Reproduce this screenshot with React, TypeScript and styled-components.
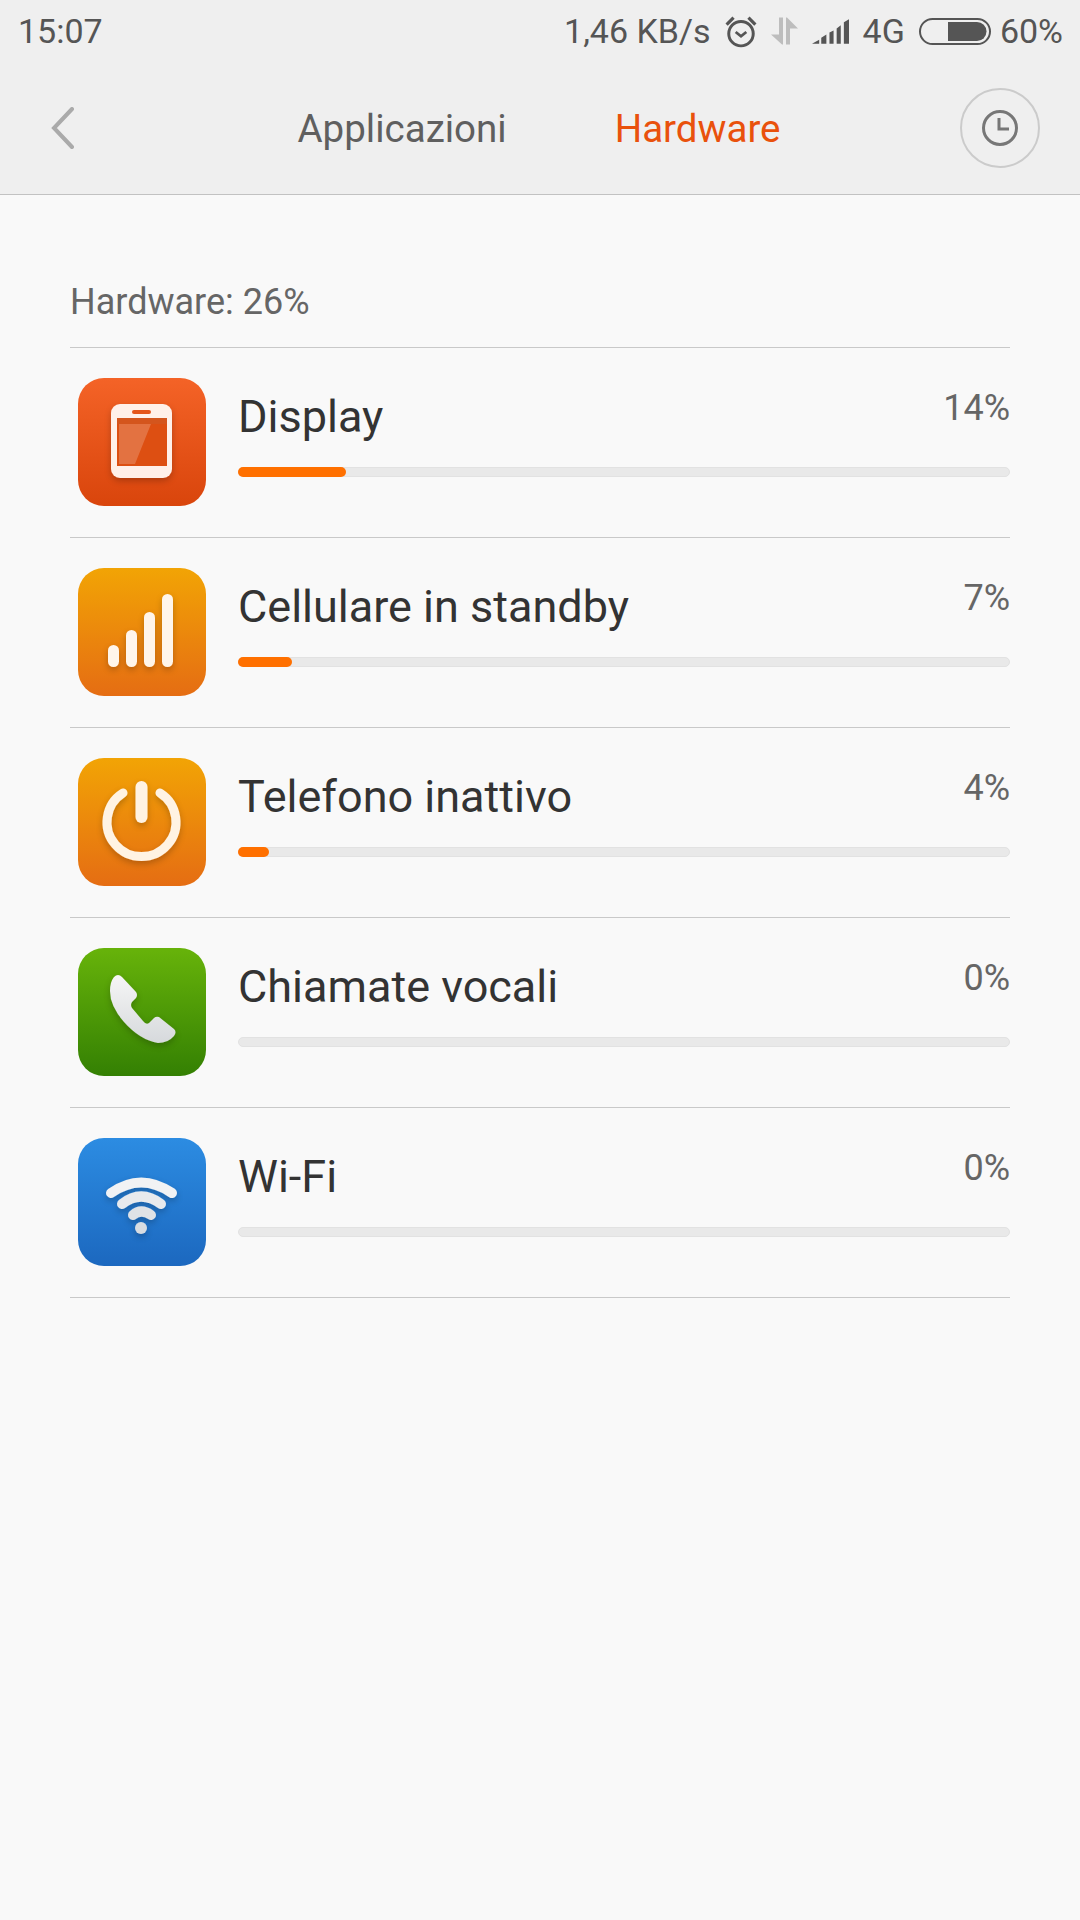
import styled, { createGlobalStyle } from "styled-components";
import type { ReactNode } from "react";

const GlobalStyle = createGlobalStyle`
    html, body {
        margin: 0;
        padding: 0;
        background: #f9f9f9;
    }
    body {
        font-family: Roboto, "Liberation Sans", sans-serif;
    }
`;

const Screen = styled.div`
    width: 1080px;
    height: 1920px;
    background: #f9f9f9;
    overflow: hidden;
`;

// Status bar + title bar
const Header = styled.header`
    height: 195px;
    box-sizing: border-box;
    background: #efefef;
    border-bottom: 1px solid #c2c2c2;
`;

const StatusBar = styled.div`
    height: 62px;
    box-sizing: border-box;
    padding: 0 17px 0 18px;
    display: flex;
    align-items: center;
    justify-content: space-between;
    color: #555;
    font-size: 34px;
`;

const StatusRight = styled.div`
    display: flex;
    align-items: center;
    gap: 14px;
`;

const BatteryValue = styled.span`
    margin-left: -5px;
`;

const TitleBar = styled.div`
    height: 132px;
    padding: 0 40px 0 50px;
    display: flex;
    align-items: center;
`;

const BackIcon = styled.svg`
    width: 26px;
    height: 42px;
    flex: none;
`;

const Tabs = styled.nav`
    flex: 1;
    display: flex;
    justify-content: center;
    gap: 108px;
    padding-left: 42px;
`;

const Tab = styled.span<{ $active?: boolean }>`
    font-size: 38.5px;
    color: ${(props) => (props.$active ? "#e9510c" : "#5f5f5f")};
`;

const HistoryButton = styled.div`
    width: 80px;
    height: 80px;
    box-sizing: border-box;
    border: 2px solid #cbcbcb;
    border-radius: 50%;
    display: flex;
    align-items: center;
    justify-content: center;
`;

// Usage list
const Content = styled.main`
    padding: 0 70px;
`;

const Summary = styled.div`
    height: 153px;
    box-sizing: border-box;
    padding-top: 86px;
    line-height: 42px;
    font-size: 36px;
    color: #666;
    border-bottom: 1px solid #c9c9c9;
`;

const Row = styled.div`
    height: 190px;
    box-sizing: border-box;
    padding: 30px 0 0 8px;
    display: flex;
    gap: 32px;
    border-bottom: 1px solid #c9c9c9;
`;

const Tile = styled.div<{ $from: string; $to: string }>`
    width: 128px;
    height: 128px;
    flex: none;
    border-radius: 26px;
    overflow: hidden;
    background: linear-gradient(${(props) => props.$from}, ${(props) => props.$to});
    svg {
        display: block;
        filter: blur(0.5px);
    }
`;

const Info = styled.div`
    flex: 1;
    min-width: 0;
`;

const InfoTop = styled.div`
    height: 89px;
    display: flex;
    justify-content: space-between;
    align-items: flex-start;
`;

const Name = styled.span`
    font-size: 45px;
    line-height: 52px;
    margin-top: 13px;
    color: #333;
`;

const Percent = styled.span`
    font-size: 36px;
    line-height: 42px;
    margin-top: 9px;
    color: #666;
`;

const Track = styled.div`
    height: 10px;
    box-sizing: border-box;
    border: 1px solid #e2e2e2;
    border-radius: 5px;
    background: #e9e9e9;
    position: relative;
`;

const Fill = styled.div<{ $value: number }>`
    position: absolute;
    left: -1px;
    top: -1px;
    bottom: -1px;
    width: ${(props) => props.$value}%;
    border-radius: 5px;
    background: #ff7000;
`;

function AlarmIcon() {
    return (
        <svg width="32" height="33" viewBox="0 0 30 31" fill="none" stroke="#555">
            <circle cx="15" cy="17.5" r="11.5" strokeWidth="2.8" />
            <path d="M10 16l5 4 5-4" strokeWidth="2.6" />
            <path d="M1.5 9L8 2.5M28.5 9L22 2.5" strokeWidth="3" />
        </svg>
    );
}

function DataIcon() {
    return (
        <svg width="27" height="28" viewBox="0 0 27 27" fill="#bdbdbd">
            <path d="M8 0h4v27h-1L0 17h8z" />
            <path d="M15 0h1l11 11h-8v16h-4z" />
        </svg>
    );
}

function SignalIcon() {
    return (
        <svg width="37" height="26" viewBox="0 0 36 25" fill="#555">
            <path d="M0 25l7-4v4z" />
            <path d="M9 19l5-3v9H9z" />
            <path d="M17 14l4-2v13h-4z" />
            <path d="M24 10l4-3v18h-4z" />
            <path d="M31 4l5-3v24h-5z" />
        </svg>
    );
}

function BatteryIcon() {
    return (
        <svg width="72" height="27" viewBox="0 0 72 27">
            <rect x="1" y="1" width="70" height="25" rx="12.5" fill="none" stroke="#555" strokeWidth="2" />
            <path d="M29 4h29a9.5 9.5 0 0 1 0 19H29z" fill="#555" />
        </svg>
    );
}

function ClockIcon() {
    return (
        <svg width="38" height="38" viewBox="0 0 38 38" fill="none" stroke="#777" strokeWidth="3">
            <circle cx="19" cy="19" r="16.5" />
            <path d="M18 9v11h10" />
        </svg>
    );
}

function IconSvg({ id, children }: { id: string; children: ReactNode }) {
    return (
        <svg width="128" height="128" viewBox="0 0 128 128">
            <defs>
                <filter id={id} x="-30%" y="-30%" width="160%" height="160%">
                    <feDropShadow dx="0" dy="3" stdDeviation="3" floodColor="#000" floodOpacity="0.22" />
                </filter>
                <linearGradient id={`${id}-grey`} x1="0" y1="0" x2="0" y2="1">
                    <stop offset="0" stopColor="#f6f6f6" />
                    <stop offset="1" stopColor="#d6d9dc" />
                </linearGradient>
            </defs>
            {children}
        </svg>
    );
}

function DisplayGlyph() {
    return (
        <IconSvg id="display">
            <g filter="url(#display)">
                <rect x="33" y="26" width="61" height="74" rx="9" fill="#fff0e9" />
            </g>
            <rect x="39" y="40" width="50" height="48" fill="#dd4f12" />
            <rect x="39" y="40" width="50" height="6" fill="#cf5a24" opacity="0.6" />
            <path d="M41 46h32L57 86H41z" fill="#ffffff" opacity="0.2" />
            <rect x="54" y="32" width="19" height="4" rx="2" fill="#e5561b" />
        </IconSvg>
    );
}

function CellularGlyph() {
    return (
        <IconSvg id="cellular">
            <g filter="url(#cellular)" fill="#fff5ea">
                <rect x="30" y="77" width="11" height="22" rx="5.5" />
                <rect x="48" y="62" width="11" height="37" rx="5.5" />
                <rect x="66" y="44" width="11" height="55" rx="5.5" />
                <rect x="84" y="26" width="11" height="73" rx="5.5" />
            </g>
        </IconSvg>
    );
}

function PowerGlyph() {
    return (
        <IconSvg id="power">
            <g filter="url(#power)" fill="none" stroke="#fff3e3" strokeLinecap="round">
                <path d="M45 35A34.5 34.5 0 1 0 82 35" strokeWidth="9" />
                <path d="M63.5 29v30" strokeWidth="12" />
            </g>
        </IconSvg>
    );
}

function CallGlyph() {
    return (
        <IconSvg id="call">
            <path
                filter="url(#call)"
                fill="url(#call-grey)"
                d="M36 29Q40 25 44 29L58 44Q60 47 58 50L54 54Q52 57 54 60L65 73Q68 77 71 75L76 70Q78 68 81 69L96 81Q99 84 96 88Q90 95 80 95Q62 92 46 74Q32 58 32 43Q32 34 36 29Z"
            />
        </IconSvg>
    );
}

function WifiGlyph() {
    return (
        <IconSvg id="wifi">
            <g filter="url(#wifi)" fill="none" strokeLinecap="round">
                <path d="M33 55Q63 34 94 55" stroke="#f1f2f4" strokeWidth="10" />
                <path d="M44 66Q63 51 83 66" stroke="#e8eaed" strokeWidth="10" />
                <path d="M55 77Q63 70 73 77" stroke="#dfe2e6" strokeWidth="10" />
                <circle cx="63" cy="90" r="6" fill="#d8dce1" />
            </g>
        </IconSvg>
    );
}

interface I_Usage {
    name: string;
    value: number;
    from: string;
    to: string;
    glyph: ReactNode;
}

const usage: I_Usage[] = [
    { name: "Display", value: 14, from: "#f46327", to: "#d9450c", glyph: <DisplayGlyph /> },
    { name: "Cellulare in standby", value: 7, from: "#f2a405", to: "#e56d13", glyph: <CellularGlyph /> },
    { name: "Telefono inattivo", value: 4, from: "#f2a405", to: "#e56d13", glyph: <PowerGlyph /> },
    { name: "Chiamate vocali", value: 0, from: "#67b30a", to: "#348003", glyph: <CallGlyph /> },
    { name: "Wi-Fi", value: 0, from: "#2c8ce2", to: "#1c68bf", glyph: <WifiGlyph /> },
];

function App() {
    return (
        <Screen>
            <GlobalStyle />
            <Header>
                <StatusBar>
                    <span>15:07</span>
                    <StatusRight>
                        <span>1,46 KB/s</span>
                        <AlarmIcon />
                        <DataIcon />
                        <SignalIcon />
                        <span>4G</span>
                        <BatteryIcon />
                        <BatteryValue>60%</BatteryValue>
                    </StatusRight>
                </StatusBar>
                <TitleBar>
                    <BackIcon viewBox="0 0 26 42" fill="none" stroke="#aaa" strokeWidth="4" strokeLinecap="round">
                        <path d="M22 2L4 21l18 19" />
                    </BackIcon>
                    <Tabs>
                        <Tab>Applicazioni</Tab>
                        <Tab $active>Hardware</Tab>
                    </Tabs>
                    <HistoryButton>
                        <ClockIcon />
                    </HistoryButton>
                </TitleBar>
            </Header>
            <Content>
                <Summary>Hardware: 26%</Summary>
                {usage.map((item) => (
                    <Row key={item.name}>
                        <Tile $from={item.from} $to={item.to}>
                            {item.glyph}
                        </Tile>
                        <Info>
                            <InfoTop>
                                <Name>{item.name}</Name>
                                <Percent>{item.value}%</Percent>
                            </InfoTop>
                            <Track>{item.value > 0 && <Fill $value={item.value} />}</Track>
                        </Info>
                    </Row>
                ))}
            </Content>
        </Screen>
    );
}

export default App;
